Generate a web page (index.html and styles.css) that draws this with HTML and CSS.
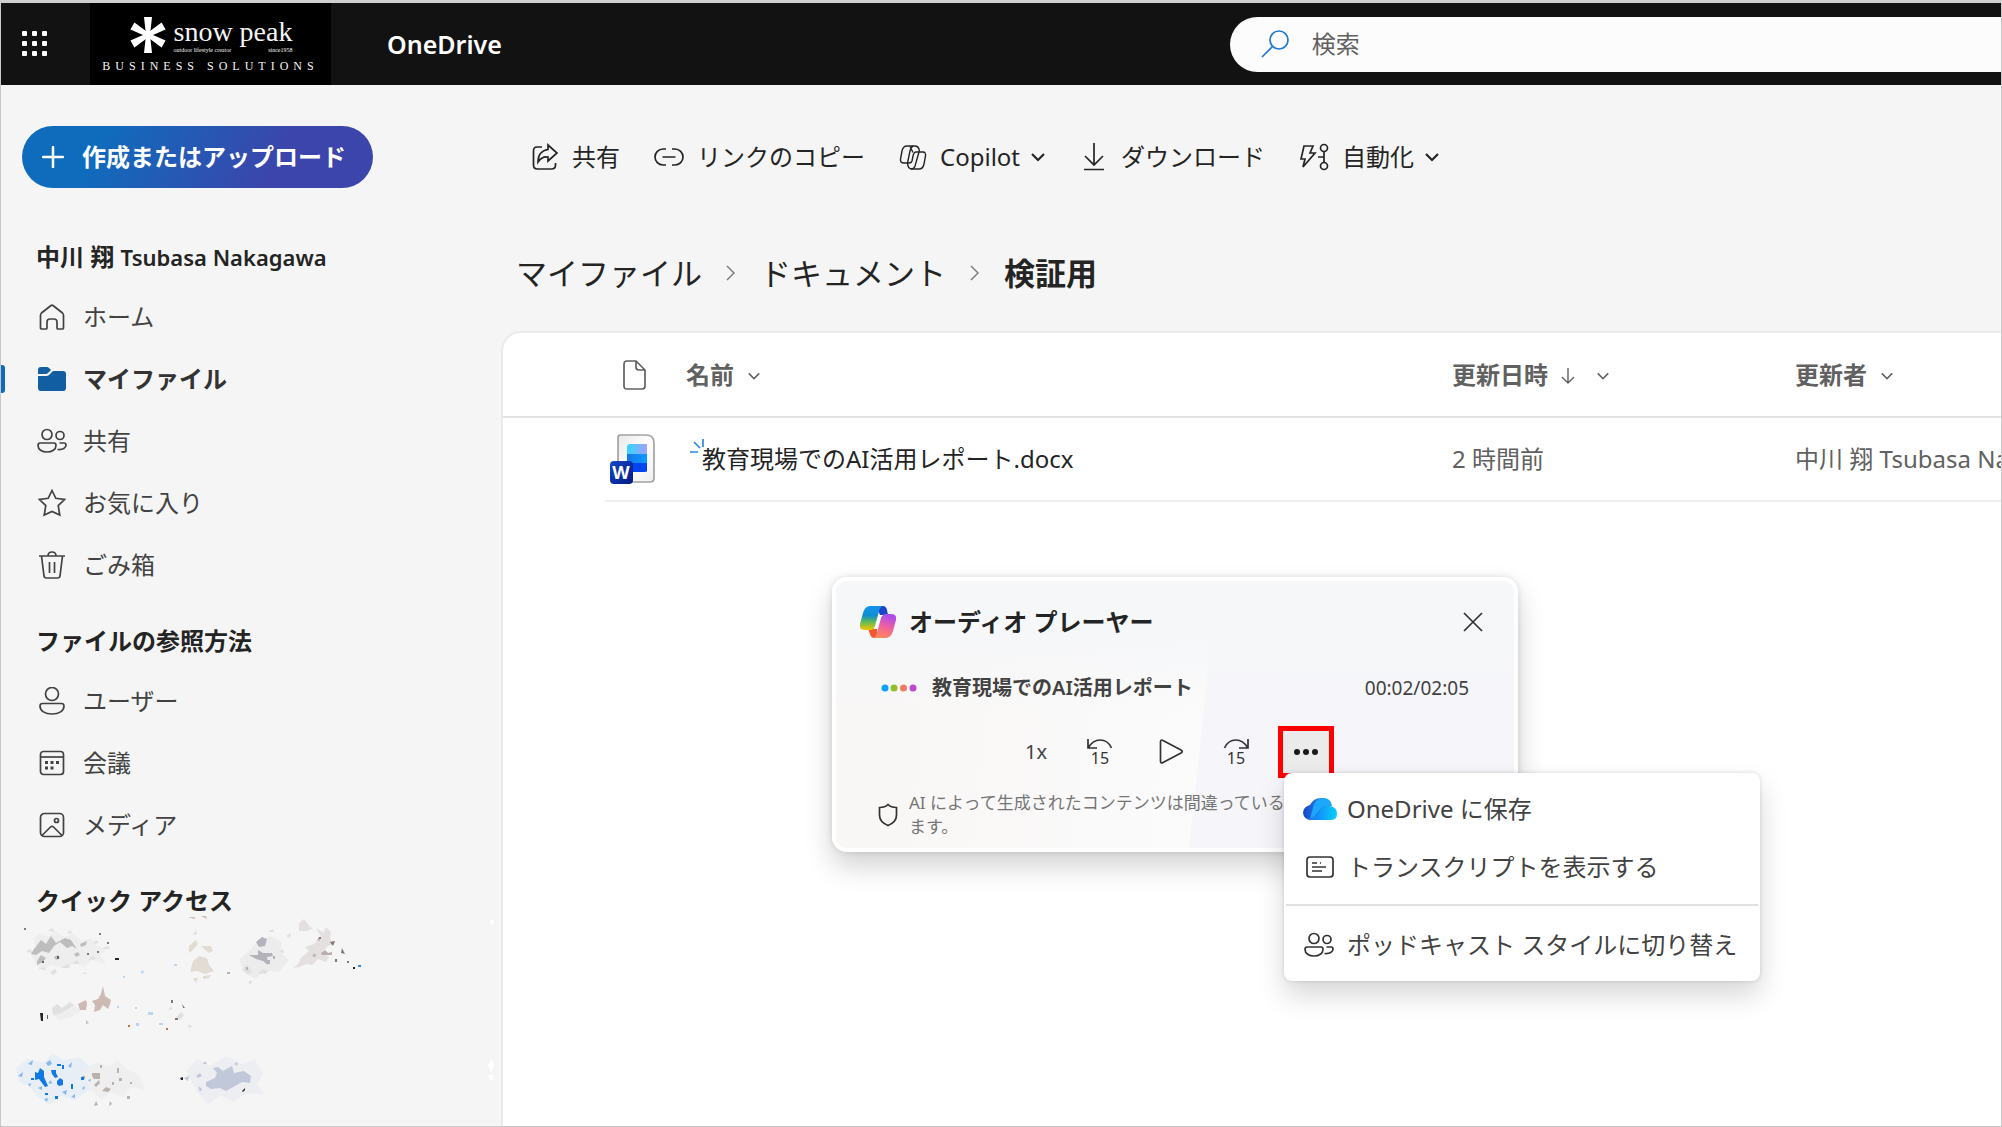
FILE: index.html
```html
<!DOCTYPE html>
<html lang="ja">
<head>
<meta charset="utf-8">
<meta name="viewport" content="width=device-width, initial-scale=1">
<title>検証用 - OneDrive</title>
<link rel="stylesheet" href="styles.css">
</head>
<body>
<svg class="sprite" aria-hidden="true">
  <symbol id="i-chevron" viewBox="0 0 16 16"><path d="M2 5l6 6 6-6"/></symbol>
  <symbol id="i-right" viewBox="0 0 16 16"><path d="M4 1l7 7-7 7"/></symbol>
  <symbol id="i-people" viewBox="0 0 32 28"><circle cx="11" cy="7.500" r="5"/><circle cx="24" cy="8.500" r="4"/><path d="M4 16h14q2 0 2 2.500c0 4-4 6.500-9 6.500s-9-2.500-9-6.500Q2 16 4 16zM23.500 16H28q2 0 2 2c0 3-3 5-8.500 4.500"/></symbol>
</svg>
<div class="app">
  <header class="topbar">
    <div class="brand">
      <button class="waffle" aria-label="アプリ起動ツール">
        <svg class="white" width="28" height="28" viewBox="0 0 28 28"><rect x="1" y="1" width="5" height="5" rx="1"/><rect x="11" y="1" width="5" height="5" rx="1"/><rect x="21" y="1" width="5" height="5" rx="1"/><rect x="1" y="11" width="5" height="5" rx="1"/><rect x="11" y="11" width="5" height="5" rx="1"/><rect x="21" y="11" width="5" height="5" rx="1"/><rect x="1" y="21" width="5" height="5" rx="1"/><rect x="11" y="21" width="5" height="5" rx="1"/><rect x="21" y="21" width="5" height="5" rx="1"/></svg>
      </button>
      <div class="logo">
        <div class="logo-row">
          <svg class="white" width="38" height="38" viewBox="0 0 38 38"><path d="M15 1h8l-2 18 2 18h-8l2-18z"/><path d="M15 1h8l-2 18 2 18h-8l2-18z" transform="rotate(60 19 19)"/><path d="M15 1h8l-2 18 2 18h-8l2-18z" transform="rotate(120 19 19)"/></svg>
          <div class="logo-words">
            <span class="logo-name">snow peak</span>
            <span class="logo-tag"><span>outdoor lifestyle creator</span><span>since1958</span></span>
          </div>
        </div>
        <span class="logo-sub">BUSINESS SOLUTIONS</span>
      </div>
      <a class="product" href="#">OneDrive</a>
    </div>
    <label class="search">
      <svg class="lens" width="32" height="32" viewBox="0 0 32 32"><circle cx="20" cy="12" r="9"/><path d="M13.500 18.500L3 29"/></svg>
      <input type="search" placeholder="検索" aria-label="検索">
    </label>
  </header>

  <div class="body">
    <nav class="side">
      <button class="create">
        <svg width="22" height="22" viewBox="0 0 22 22"><path d="M11 1v20M1 11h20"/></svg>
        作成またはアップロード
      </button>
      <h2>中川 翔 <span class="latin">Tsubasa Nakagawa</span></h2>
      <ul>
        <li><a href="#"><svg class="ico" viewBox="0 0 28 28"><path d="M2.500 12.500q0-1.500 1-2.500L13 2.500q1-.8 2 0l9.500 7.500q1 1 1 2.500V25q0 1-1 1H20q-1 0-1-1v-6q0-3-3-3h-4q-3 0-3 3v6q0 1-1 1H3.500q-1 0-1-1z"/></svg>ホーム</a></li>
        <li class="current"><a href="#"><svg class="ico folder" viewBox="0 0 28 28"><path d="M0 9V5q0-3 3-3h6q1 0 2 1l2 2-3 3q-1 1-2 1zM0 11h8q2 0 3-1l3-3q1-1 2-1h9q3 0 3 3v14q0 3-3 3H3q-3 0-3-3z"/></svg>マイファイル</a></li>
        <li><a href="#"><svg class="ico people" viewBox="0 0 32 28"><use href="#i-people"/></svg>共有</a></li>
        <li><a href="#"><svg class="ico" viewBox="0 0 28 28"><path d="M14 1.500l3.800 7.800 8.700 1.200-6.300 6.100 1.600 9.400-7.800-3.500L6.200 26l1.600-9.400-6.300-6.100 8.700-1.200z"/></svg>お気に入り</a></li>
        <li><a href="#"><svg class="ico" viewBox="0 0 28 28"><path d="M1 5h26M10 5q0-4 4-4t4 4M3.500 5l2.500 20q.3 2 2 2h12q1.700 0 2-2L24.500 5M11.500 11v11M16.500 11v11"/></svg>ごみ箱</a></li>
      </ul>
      <h2>ファイルの参照方法</h2>
      <ul>
        <li><a href="#"><svg class="ico" viewBox="0 0 28 28"><circle cx="14" cy="7" r="6.500"/><path d="M4.500 16.500h19q2.500 0 2.500 2.500c0 5-5 8-12 8s-12-3-12-8q0-2.500 2.500-2.500z"/></svg>ユーザー</a></li>
        <li><a href="#"><svg class="ico" viewBox="0 0 28 28"><rect x="2.500" y="2.500" width="23" height="23" rx="3"/><path d="M3 8h22"/><path class="solid" d="M7 12h3v3H7zM12.500 12h3v3h-3zM18 12h3v3h-3zM7 17.500h3v3H7zM12.500 17.500h3v3h-3z"/></svg>会議</a></li>
        <li><a href="#"><svg class="ico" viewBox="0 0 28 28"><rect x="2.500" y="2.500" width="23" height="23" rx="4"/><circle cx="18.500" cy="9.500" r="2"/><path d="M4 24.500l8.500-8.500q1.500-1.500 3 0l8.500 8.500"/></svg>メディア</a></li>
      </ul>
      <h2>クイック アクセス</h2>
      <svg class="smudges" width="480" height="196" viewBox="0 0 480 196" aria-hidden="true">
        <g opacity=".35"><path fill="#e2e2e2" d="M18 22l6-5 8 4 7-6 9 6 10-3 7 7 11-3 4 8 12 2-8 7 6 9-14-4-8 7-10-4-9 5-14-3-8 5-7-6-5-9 5-7zM36 95l8-4 5 5 9-7 7 6-9 6-12 3-6-4z"/><path fill="#dedede" d="M223 44l10-9 9-10 12-5 12 6-2 10 9 8-10 12-14-2-9 9-10-5z"/><path fill="#d2e3f7" d="M0 152l12-9 16 4 8-10 12 7 15-3 10 9 11-4-6 13 8 10-15 6-12 9-14-4-11 9-12-8-9-11-10-4z"/><path fill="#e4e4e4" d="M68 155l14-8 12 3 8-6 9 9 12 6 6 15-14-3-8 10-12-5-10 8-13-14z"/><path fill="#dde2ee" d="M170 155l12-12 12 7 16-10 16 8 13-4 8 14-6 11 8 10-18-2-14 9-12-7-13 9-12-13z"/></g>
        <path fill="#e4e0e0" d="M283 7l5-4 6 8 3 1-6 3-8 0zM300 12l8 5 4 7-5 0zM285 42l8-7-4-4 9-3 8-8 4-9 5 5-1 7 5 5-7 2-6 6 7 5-3 5-8-3-6 6-6-1-6 3-7 1 5-4z"/>
        <path fill="#e0e0e0" d="M10 36l4-3 3 4zM22 53l6-2 3 3zM34 56l5-3 2 3-4 3zM45 52l7-4 2 4zM56 48l5-4 2 4zM72 44l5-4 3 3zM86 32l6-2 2 3zM32 15l4-3 3 4zM51 17l3-3 3 4zM77 28l3-4 3 3zM66 58l3-2 2 2zM226 54l4-5 4 3 2 5-4 1zM242 57l5-4 6 2-4 3zM232 66l4-2-1 5zM262 36l5-3 1 4zM270 20l5-3-1 5zM252 16l5-3 1 3zM36 92l5-4 5 4 8-6 4 3-7 5-8 4-6 1zM160 101l5-5 3 3-4 5zM172 108l4 2-3 3zM152 94l3-4 2 3z"/>
        <g fill="#bdbdbd"><path d="M18 33l7-9 5 4 5-8 5 7 9-5 6 2 6 9-5-3-5 2-7-6-6 4-5 7-7-2-6 4-5-1zM21 45l4-6 5 3-3 4-6 3zM38 41l4-2 2 3-4 2zM64 28l7-3-1 4-5 2zM58 38l4-2 2 3-4 2z"/></g>
        <g fill="#b4b3bb"><path d="M240 26l6-5 5 2-2 7-6 1zM233 39h9v-5l5 3h9l1 3-6 1 1 8-5-4-7-2zM250 44h4v4h-4zM257 40h2v3h-2zM211 56h3v2h-3zM230 51h2v3h-2z"/></g>
        <g fill="#e3dcd4"><path d="M173 30l7-6 2 4-6 7-3 2zM185 30h10l2 5-4 2-5-4zM177 45l6-5 8 2 2 7 5 6-9 3-8-3-7 1zM177 62h5l-2 5zM187 60l8-1-2 3-6 1zM177 18l4-4-1 5z"/></g>
        <path fill="#b6afac" d="M305 37l4-3 3 3 4-1v3h-10zM296 40l3-3 1 4zM301 24l2-3 1 4z"/>
        <g fill="#cdbab5"><path d="M62 88l8-4 1 4-1 6-6 0zM76 85l6-2 3-5 2-8 2 10 6 4-1 4-2 5-5-4-3 5-6 2 1-7zM70 104l3 3-3 1zM172 1h7v2zM185 0h5l1 3z"/></g>
        <g fill="#b9b1ac"><path d="M76 157h8v6h-6l-2-3zM78 169l5-5 1 3-4 4zM101 152h2v5h-2zM103 162h3v3h-3zM111 180h3v3h-3zM96 166h2v3h-2zM66 160h3v3h-3zM84 149h2v3h-2zM86 175l4-4 5 2-3 3zM78 190l2-5 2 4zM93 190l1-5 2 3zM114 166h2v2h-2z"/></g>
        <g fill="#c1c8d9"><path d="M190 166l9-4 2-5-4-5 5-1 5 4 9-5 2 7 10-2 7 5-1 7-8-1-7 4-9 5-6-3-9 1-5-3zM180 160l4-3 2 3-4 2zM182 170l4 3-2 3zM168 162l5-2-1 5zM187 148l2-3 2 3zM218 148l3-2 1 4z"/></g>
        <path fill="#86b8ee" d="M2 160l5-4-1 5zM12 148l5-4-1 5zM30 147l4-3 2 4-4 2zM52 150l4-4-1 6zM22 172l4-2v4zM46 176l5-2-1 5zM28 183l4-1-1 4zM55 181l4-3v4zM12 168l3-1-1 4zM32 167l3-3 1 4zM66 172l3-2-1 4zM72 164l3-1-1 3z"/>
        <g fill="#1178e8"><path d="M19 156l3 1 2-5 4 3v6l4 9-3 1-6-8-4 1zM35 154h5v3l2 4-3 1-3-4zM41 165l3-3 3 2v5l-4 1-2-2zM29 177h3v2h-3zM39 180h3v3h-3zM55 168h2v5h-2zM46 149h2v4h-2zM65 161h3v3h-3zM15 162h3v2h-3zM41 148h4v2h-4z"/></g>
        <path fill="#262626" d="M99 42h4v2h-4zM24 97h3v8h-2zM337 51h2v2h-2zM164 162l3-1v3h-2zM226 175l3-3v2l-2 2z"/>
        <path fill="#666" d="M31 99h1v4h-1zM41 40h2v3h-2zM26 45h2v2h-2z"/>
        <path fill="#837771" d="M314 26l5-1-2 5zM303 21h2v2h-2zM326 32l3 6-4-1zM319 43h2v3h-2zM331 45h2v2h-2zM8 12h2v2H8zM83 17h2v2h-2zM91 26h2v2h-2zM81 35h2v2h-2zM71 37h2v2h-2zM155 84h2v3h-2zM159 102h3v2h-3zM166 88l3 4h-2z"/>
        <path fill="#bad5ed" d="M124 56l4-2-1 4zM158 48h3v2h-3zM101 90h2v2h-2zM119 91h2v2h-2zM132 96h5v3h-5zM120 107h3v3h-3zM143 107h4v2h-4zM107 60h2v2h-2z"/>
        <path fill="#c87044" d="M150 112h2v2h-2zM112 109h2v2h-2z"/><path fill="#308bd0" d="M342 49h3v2h-3z"/>
        <path fill="#fff" d="M475 3l3 1-1 5-3-1zM472 148l4-5 2 6-3 8zM473 159h4v5h-4z"/>
      </svg>
    </nav>

    <main class="main">
      <div class="toolbar" role="toolbar">
        <button><svg width="28" height="28" viewBox="0 0 28 28"><path d="M11 4H6Q2.500 4 2.500 8v14q0 4 4 4h14q4 0 4-4v-2"/><path d="M17 2l9 8-9 8v-4q-6-1-10 5Q7 8 17 6.500z"/></svg>共有</button>
        <button><svg width="30" height="28" viewBox="0 0 30 28"><path d="M12 6H9a8 8 0 0 0 0 16h3M18 6h3a8 8 0 0 1 0 16h-3M8.500 14h13" /></svg>リンクのコピー</button>
        <button><svg class="thin" width="28" height="28" viewBox="0 0 28 28"><path d="M8 3h8q3 0 4 3l.5 3H24q3 0 2.500 4l-1.500 8q-1 5-5 5h-7q-3 0-4-3l-.5-3H5q-4 0-3.500-4L3 8q1-5 5-5z"/><path d="M14 3q-2 1-3 5L8.500 20M20.500 9H17q-2 0-3 4l-1 5q-.5 2-3 2H8.500M11 3.500l3 6M20 9l-4 14q-1 3-4 3"/></svg>Copilot<svg class="chev" width="16" height="16"><use href="#i-chevron"/></svg></button>
        <button><svg width="28" height="28" viewBox="0 0 28 28"><path d="M14 0v21M5 13l9 9 9-9M4 26.500h20"/></svg>ダウンロード</button>
        <button><svg width="30" height="28" viewBox="0 0 30 28"><path d="M5 3h9l-3 7h5L4 24l2-8H2zM25 8.500v11M25 14h-6"/><circle cx="25" cy="5" r="3.500"/><circle cx="25" cy="23" r="3.500"/></svg>自動化<svg class="chev" width="16" height="16"><use href="#i-chevron"/></svg></button>
      </div>

      <nav class="crumbs">
        <a href="#">マイファイル</a>
        <svg width="16" height="16"><use href="#i-right"/></svg>
        <a href="#">ドキュメント</a>
        <svg width="16" height="16"><use href="#i-right"/></svg>
        <strong>検証用</strong>
      </nav>

      <section class="panel">
        <table>
          <colgroup><col class="c-select"><col class="c-icon"><col><col class="c-date"><col class="c-author"></colgroup>
          <thead>
            <tr>
              <th></th>
              <th><svg class="doc" width="24" height="30" viewBox="0 0 24 30"><path d="M4 1h9l9 9v16q0 3-3 3H4q-3 0-3-3V4q0-3 3-3zM13 1v6q0 3 3 3h6"/></svg></th>
              <th>名前<svg class="chev" width="14" height="14"><use href="#i-chevron"/></svg></th>
              <th>更新日時<svg class="sort" width="14" height="16" viewBox="0 0 14 16"><path d="M7 0v15M1 9l6 6 6-6"/></svg><svg class="chev" width="14" height="14"><use href="#i-chevron"/></svg></th>
              <th>更新者<svg class="chev" width="14" height="14"><use href="#i-chevron"/></svg></th>
            </tr>
          </thead>
          <tbody>
            <tr>
              <td></td>
              <td>
                <svg class="word" width="46" height="50" viewBox="0 0 46 50">
                  <defs><linearGradient id="wp" x1="0" y1="0" x2="1" y2="1"><stop offset="0" stop-color="#e8e8e8"/><stop offset=".5" stop-color="#fff"/><stop offset="1" stop-color="#eee"/></linearGradient><linearGradient id="wa"><stop stop-color="#2fd6ff"/><stop offset="1" stop-color="#a3a0ff"/></linearGradient><linearGradient id="wb"><stop stop-color="#1577e8"/><stop offset="1" stop-color="#0b9bff"/></linearGradient><linearGradient id="wc" x1="0" y1="0" x2="1" y2="1"><stop stop-color="#1547c8"/><stop offset="1" stop-color="#031a84"/></linearGradient></defs>
                  <path d="M10 1h26q8 0 8 8v35q0 4-4 4H12q-4 0-4-4V4q0-3 2-3z" fill="url(#wp)" stroke="#a3a3a3"/>
                  <path d="M19 10h18v10H17v-8z" fill="url(#wa)"/><path d="M17 20h20v9H17z" fill="url(#wb)"/><path d="M17 29h20v8q0 1-2 1H17z" fill="#0344f0"/>
                  <rect y="27" width="23" height="23" rx="4" fill="url(#wc)"/>
                  <text x="11" y="45" class="word-w" text-anchor="middle">W</text>
                </svg>
              </td>
              <td class="name"><a href="#"><svg class="spark" width="16" height="16" viewBox="0 0 16 16"><path d="M4 4l6 6M13 1v8M0 14h8"/></svg>教育現場でのAI活用レポート.docx</a></td>
              <td>2 時間前</td>
              <td>中川 翔 Tsubasa Nakagawa</td>
            </tr>
          </tbody>
        </table>

        <section class="player" aria-label="オーディオ プレーヤー">
          <div class="player-head">
            <svg width="36" height="34" viewBox="0 0 36 34">
              <defs><linearGradient id="ca" x1="0" y1="0" x2="0" y2="1"><stop stop-color="#1593ee"/><stop offset=".4" stop-color="#0f8fd0"/><stop offset=".65" stop-color="#5ab95a"/><stop offset="1" stop-color="#f7c600"/></linearGradient><linearGradient id="cb" x1=".6" y1="0" x2=".3" y2="1"><stop stop-color="#a64cf0"/><stop offset=".5" stop-color="#f0609e"/><stop offset="1" stop-color="#ff8a5c"/></linearGradient></defs>
              <path d="M16 1h7q3 0 4 4l1 5h-8z" fill="#1c45c8"/><path d="M8 24h9l1 9h-4q-3 0-4-4z" fill="#f2582a"/>
              <path d="M10 1h13q-3 1-4 5l-4 15q-1 4-5 4H5q-6 0-5-6L3 8q2-7 7-7z" fill="url(#ca)"/>
              <path d="M26 33H13q3-1 4-5l4-15q1-4 5-4h5q6 0 5 6l-3 11q-2 7-7 7z" fill="url(#cb)"/>
              <path d="M19 10h4q-2 1-3 5l-3 9h-3q1-1 2-5z" fill="#fff"/>
            </svg>
            <h3>オーディオ プレーヤー</h3>
            <button class="close" aria-label="閉じる"><svg width="20" height="20" viewBox="0 0 20 20"><path d="M1 1l18 18M19 1L1 19"/></svg></button>
          </div>
          <div class="track">
            <svg width="37" height="8" viewBox="0 0 37 8"><circle cx="4" cy="4" r="3.500" fill="#0aa2fb"/><circle cx="13" cy="4" r="3.500" fill="#97bd2c"/><circle cx="22.500" cy="4" r="3.500" fill="#fb7a62"/><circle cx="32" cy="4" r="3.500" fill="#c049c9"/></svg>
            <strong>教育現場でのAI活用レポート</strong>
            <time>00:02/02:05</time>
          </div>
          <div class="controls">
            <button>1x</button>
            <button aria-label="15 秒戻る"><svg width="28" height="28" viewBox="0 0 28 28"><path d="M2 1v9h9M2.500 9.500Q7 2 14 2q8 0 11.500 8"/><text x="14" y="26" text-anchor="middle">15</text></svg></button>
            <button aria-label="再生"><svg width="30" height="28" viewBox="-6 0 30 28"><path d="M1.500 4q0-3 2.500-1.500l18 9.500q2.500 1.500 0 3L4 24.500q-2.500 1.500-2.500-1.500z"/></svg></button>
            <button aria-label="15 秒進む"><svg width="28" height="28" viewBox="0 0 28 28"><path d="M26 1v9h-9M25.500 9.500Q21 2 14 2 6 2 2.500 10"/><text x="14" y="26" text-anchor="middle">15</text></svg></button>
            <button class="more" aria-label="その他のオプション" aria-expanded="true"><svg width="24" height="8" viewBox="0 0 24 8"><circle cx="3" cy="4" r="3"/><circle cx="12" cy="4" r="3"/><circle cx="21" cy="4" r="3"/></svg></button>
          </div>
          <div class="notice">
            <svg width="20" height="24" viewBox="0 0 20 24"><path d="M10 1.500q3 3 8.500 3V12q0 7-8.500 10.500Q1.500 19 1.500 12V4.500q5.500 0 8.500-3z"/></svg>
            <p>AI によって生成されたコンテンツは間違っている場合があります。</p>
          </div>
          <div class="menu" role="menu">
            <button role="menuitem"><svg width="34" height="24" viewBox="0 0 34 24"><defs><linearGradient id="oa"><stop stop-color="#1647c8"/><stop offset="1" stop-color="#2f9df8"/></linearGradient><linearGradient id="ob"><stop stop-color="#1476f5"/><stop offset="1" stop-color="#08cffd"/></linearGradient></defs><path d="M8 23Q1 23 0 16q0-6 7-8 4-8 13-7 6 1 8 8z" fill="url(#oa)"/><path d="M11 7q4-7 11-6 6 1 7 8-9-2-14 6-3 5-8 7Z" fill="#1ba8fc"/><path d="M7 23q4-1 9-8 4-7 11-6 7 1 7 8 0 6-7 6z" fill="url(#ob)"/></svg>OneDrive に保存</button>
            <button role="menuitem"><svg width="34" height="28" viewBox="0 0 34 28"><rect x="4" y="4" width="26" height="20" rx="3"/><path d="M9 10h5M17 10h1M9 14h14M9 18h10"/></svg>トランスクリプトを表示する</button>
            <hr>
            <button role="menuitem"><svg width="34" height="28" viewBox="0 0 34 28"><use href="#i-people" width="32" height="28"/></svg>ポッドキャスト スタイルに切り替え</button>
          </div>
        </section>
      </section>
    </main>
  </div>
</div>
</body>
</html>
```
FILE: styles.css
```css
* { box-sizing: border-box; }

body {
  margin: 0;
  font: 24px/36px "Noto Sans", "Noto Sans CJK JP", sans-serif;
  color: #242424;
  background: #f5f5f5;
}

a { color: inherit; text-decoration: none; }

button {
  padding: 0;
  border: 0;
  background: none;
  color: inherit;
  font: inherit;
}

svg {
  flex: none;
  fill: none;
  stroke-width: 1.7;
}

.white { fill: #fff; }

.sprite {
  position: absolute;
  width: 0;
  height: 0;
}

.app {
  display: flex;
  flex-direction: column;
  min-height: 100vh;
  border: 1px solid #c8c8c8;
  border-top: 3px solid #cfcfcf;
  overflow: hidden;
}

/* Top bar */
.topbar {
  display: grid;
  grid-template-columns: minmax(0, 8fr) minmax(0, 5fr);
  align-items: center;
  height: 82px;
  background: #121212;
}

.brand {
  display: flex;
  align-items: center;
  height: 100%;
}

.waffle {
  display: flex;
  justify-content: center;
  width: 89px;
  padding-right: 21px;
}

.logo {
  display: flex;
  flex-direction: column;
  align-items: center;
  width: 241px;
  height: 100%;
  padding-top: 12px;
  background: #000;
  color: #f4f4f4;
  font-family: "Liberation Serif", serif;
}

.logo-row {
  display: flex;
  align-items: center;
  gap: 7px;
  height: 40px;
}

.logo-words {
  display: flex;
  flex-direction: column;
}

.logo-name {
  font-size: 28px;
  line-height: 30px;
}

.logo-tag {
  display: flex;
  justify-content: space-between;
  font-size: 6px;
  line-height: 6px;
}

.logo-sub {
  font-size: 12px;
  line-height: 22px;
  letter-spacing: 5px;
  white-space: nowrap;
}

.product {
  margin-left: 56px;
  color: #fff;
  font-size: 25px;
  font-weight: 600;
}

.search {
  display: flex;
  align-items: center;
  gap: 21px;
  height: 55px;
  margin-left: -2px;
  padding-left: 29px;
  border-radius: 28px 0 0 28px;
  background: #fcfcfc;
}

.lens { stroke: #1f78cf; }

.search input {
  flex: 1;
  min-width: 0;
  padding: 0;
  border: 0;
  outline: 0;
  background: none;
  font: inherit;
}

.search input::placeholder { color: #616161; }

/* Sidebar */
.body {
  display: flex;
  flex: 1;
}

.side {
  flex: none;
  width: 500px;
  padding-top: 41px;
}

.create {
  display: flex;
  align-items: center;
  gap: 18px;
  height: 62px;
  margin-left: 21px;
  padding: 0 27px 0 20px;
  border-radius: 31px;
  background: linear-gradient(120deg, #0f6cbd 22%, #3c45ab 72%);
  color: #fff;
  font-weight: 600;
}

.create svg {
  stroke: #fff;
  stroke-width: 2.5;
  stroke-linecap: round;
}

.side h2 {
  margin: 51px 0 11px 35px;
  font-size: 24px;
  font-weight: 600;
  line-height: 36px;
}

.latin { font-size: 22px; }

.side ul + h2 { margin-top: 27px; }
.side ul + h2 + ul { margin-top: 10px; }

.side ul {
  margin: 0;
  padding: 0;
  list-style: none;
  color: #424242;
}

.side li {
  display: flex;
  height: 62px;
}

.side a {
  display: flex;
  flex: 1;
  align-items: center;
  gap: 17px;
  padding-left: 37px;
}

.current a {
  padding-left: 33px;
  color: #333;
  font-weight: 600;
}

.current::before {
  content: "";
  align-self: center;
  width: 4px;
  height: 28px;
  border-radius: 0 3px 3px 0;
  background: #0f6cbd;
}

.ico {
  width: 28px;
  height: 28px;
  stroke: #424242;
}

.people {
  width: 32px;
  margin: 0 -2px;
}

.folder {
  fill: #115ea3;
  stroke: none;
}

.solid {
  fill: #424242;
  stroke: none;
}

.smudges {
  display: block;
  margin: -14px 0 0 15px;
}

/* Main column */
.main {
  display: flex;
  flex: 1;
  flex-direction: column;
  min-width: 0;
}

.toolbar {
  display: flex;
  align-items: center;
  gap: 34px;
  height: 62px;
  margin-top: 41px;
  padding-left: 30px;
}

.toolbar button {
  display: flex;
  align-items: center;
  gap: 13px;
  white-space: nowrap;
}

.toolbar svg { stroke: #242424; }
.toolbar .thin { stroke-width: 1.4; }

.toolbar .chev {
  margin-left: -3px;
  stroke-width: 2.2;
}

.crumbs {
  display: flex;
  align-items: center;
  gap: 21px;
  height: 44px;
  margin: 63px 0 36px 15px;
  font-size: 31px;
  line-height: 44px;
}

.crumbs svg {
  stroke: #767676;
  stroke-width: 1.4;
}

.crumbs strong { font-weight: 600; }

.panel {
  position: relative;
  flex: 1;
  min-height: 560px;
  border: 2px solid #ebebeb;
  border-right: 0;
  border-bottom: 0;
  border-radius: 20px 0 0 0;
  background: #fff;
}

table {
  width: 100%;
  border-collapse: collapse;
  table-layout: fixed;
  color: #616161;
}

.c-select { width: 102px; }
.c-icon { width: 81px; }
.c-date { width: 343px; }
.c-author { width: 206px; }

th, td {
  height: 84px;
  padding: 0;
  overflow: hidden;
  text-align: left;
  vertical-align: middle;
  white-space: nowrap;
}

th {
  border-bottom: 2px solid #e3e3e3;
  font-weight: 600;
}

td + td { border-bottom: 2px solid #f0f0f0; }

th svg { stroke: #616161; }
th .chev { margin-left: 13px; vertical-align: 1px; }
th .sort { margin-left: 13px; stroke-width: 1.4; vertical-align: 0; }
th .sort + .chev { margin-left: 21px; }

.doc {
  display: block;
  margin-left: 18px;
}

.word {
  display: block;
  margin-left: 5px;
}

.word-w {
  fill: #fff;
  font-size: 18px;
  font-weight: 700;
}

.name { color: #242424; }

.name a {
  position: relative;
  padding-left: 16px;
}

/* "New item" mark over the corner of the file name */
.spark {
  position: absolute;
  top: -4px;
  left: 4px;
  stroke: #2a8bdd;
}

/* Audio player */
.player {
  position: absolute;
  top: 244px;
  left: 329px;
  width: 686px;
  height: 275px;
  padding: 22px 31px 0 24px;
  border: 4px solid #fff;
  border-radius: 15px;
  background:
    linear-gradient(180deg, #f6f7f9 20%, rgba(246, 247, 249, 0) 50%),
    linear-gradient(96deg, #f9f7f6 10%, #fbfbfb 54%, #f6f6fa 54%);
  box-shadow: 0 14px 28px rgba(0, 0, 0, .18), 0 0 6px rgba(0, 0, 0, .12);
}

.player svg { stroke: #333; }

.player-head {
  display: flex;
  align-items: center;
  gap: 13px;
  height: 38px;
}

.player-head > svg, .track svg { stroke: none; }

.player h3 {
  margin: 0;
  font-size: 24px;
  font-weight: 600;
}

.close {
  display: flex;
  margin-left: auto;
}

.track {
  display: flex;
  align-items: center;
  gap: 14px;
  height: 32px;
  margin-top: 31px;
  padding: 0 14px 0 21px;
  color: #424242;
  font-size: 20px;
  line-height: 32px;
}

.track strong { font-weight: 600; }

.track time {
  margin-left: auto;
  font-size: 19px;
}

.controls {
  display: flex;
  align-items: center;
  justify-content: flex-end;
  gap: 39px;
  height: 52px;
  margin-top: 22px;
  padding-right: 149px;
  color: #424242;
  font-size: 20px;
}

.controls button {
  display: flex;
  align-items: center;
  justify-content: center;
}

.controls svg { overflow: visible; }

.controls text {
  fill: #333;
  stroke: none;
  font-size: 16px;
  line-height: 20px;
}

.controls .more {
  width: 56px;
  height: 52px;
  margin-left: -11px;
  border: 5px solid #f00;
  background: #ebebeb;
}

.controls .more svg {
  fill: #1a1a1a;
  stroke: none;
}

.notice {
  display: flex;
  align-items: center;
  gap: 11px;
  width: 514px;
  margin-top: 13px;
  padding-left: 18px;
}

.notice p {
  margin: 0;
  color: #757575;
  font-size: 17px;
  line-height: 24px;
}

/* Menu opened from the "more" button */
.menu {
  position: absolute;
  top: 192px;
  left: 448px;
  width: 476px;
  padding: 7px 2px;
  border-radius: 8px;
  background: #fff;
  box-shadow: 0 14px 28px rgba(0, 0, 0, .16), 0 0 4px rgba(0, 0, 0, .14);
  color: #424242;
}

.menu button {
  display: flex;
  align-items: center;
  gap: 10px;
  width: 100%;
  height: 58px;
  padding-left: 17px;
  white-space: nowrap;
}

.menu button:first-child svg { stroke: none; }

.menu hr {
  height: 2px;
  margin: 8px 0 10px;
  border: 0;
  background: #e0e0e0;
}
```
